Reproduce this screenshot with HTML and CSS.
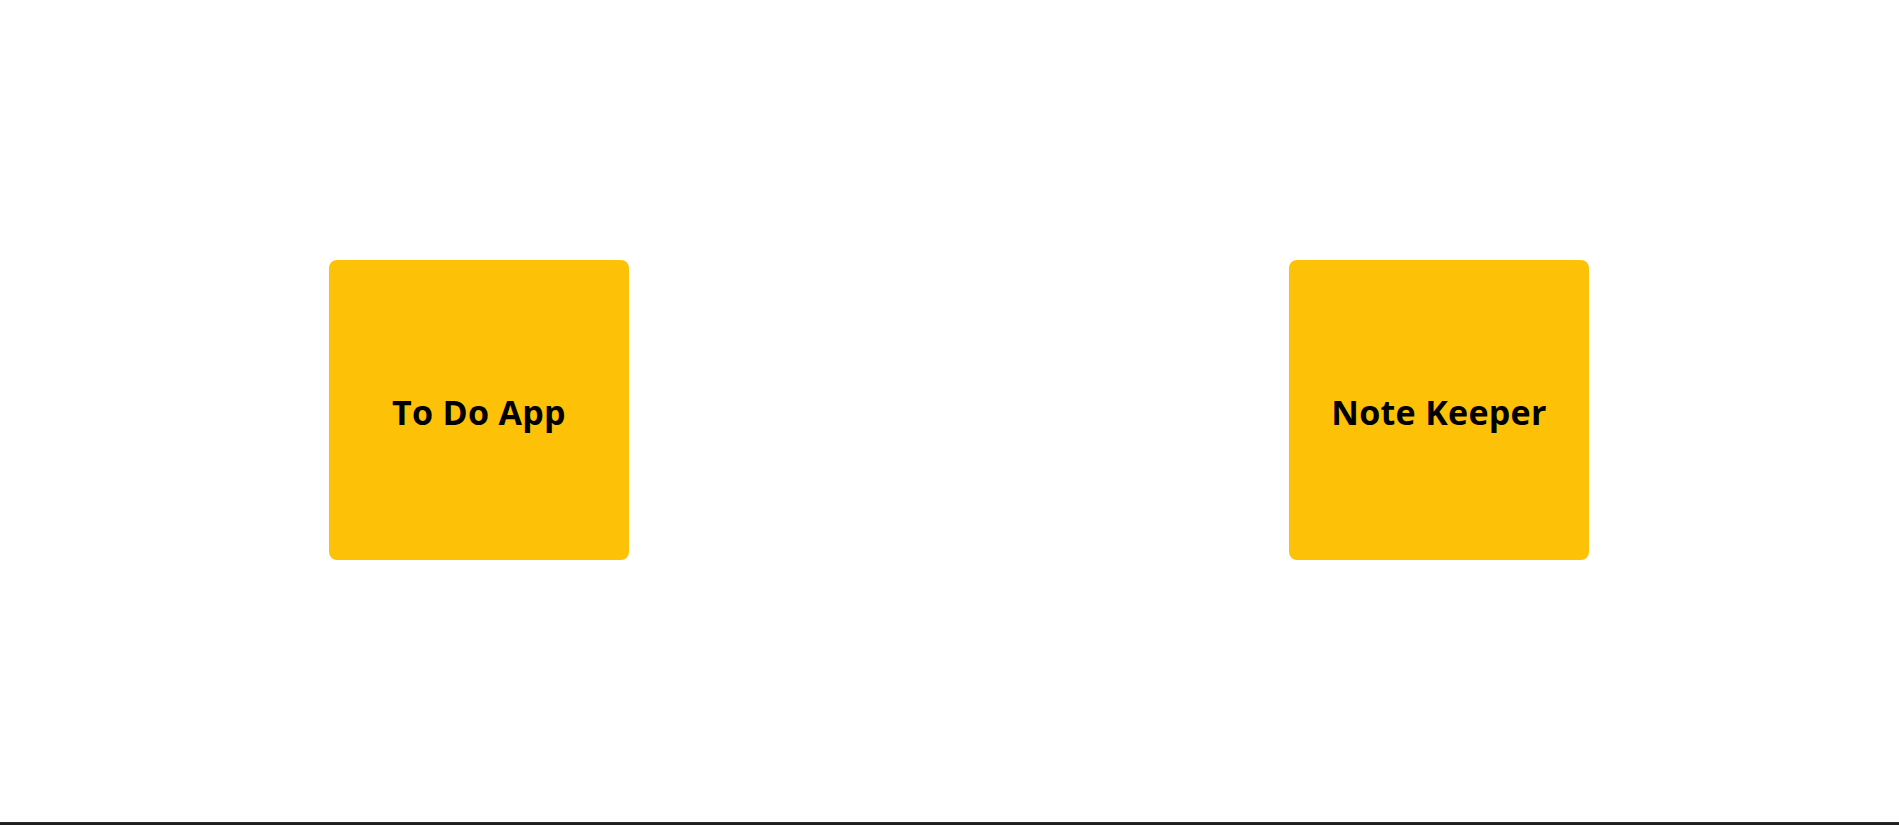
FILE: index.html
```html
<!DOCTYPE html>
<html lang="en">
<head>
<meta charset="utf-8">
<title>Apps</title>
<link rel="stylesheet" href="styles.css">
</head>
<body>
  <main class="apps">
    <a class="app-card" href="#"><h1 class="app-title">To Do App</h1></a>
    <a class="app-card" href="#"><h1 class="app-title">Note Keeper</h1></a>
  </main>
  <div class="bottom-edge"></div>
</body>
</html>
```

FILE: styles.css
```css
html, body {
  margin: 0;
  padding: 0;
  background: #ffffff;
  overflow: hidden;
}

body {
  font-family: "Open Sans", "Noto Sans", sans-serif;
}

.apps {
  height: 820px;
  display: flex;
  align-items: center;
  padding-left: 329px;
  gap: 660px;
  box-sizing: border-box;
}

.app-card {
  flex: 0 0 300px;
  width: 300px;
  height: 300px;
  background: #fdc107;
  border-radius: 8px;
  display: flex;
  align-items: center;
  justify-content: center;
  text-decoration: none;
  color: #000000;
}

.app-title {
  margin: 0;
  padding-top: 3px;
  font-size: 34px;
  font-weight: 700;
  letter-spacing: 0.3px;
}

.bottom-edge {
  height: 5px;
  background: linear-gradient(#ffffff 0, #ffffff 2px, #2b2b2b 2px, #2b2b2b 3px, #1f1f1f 3px);
}
```
